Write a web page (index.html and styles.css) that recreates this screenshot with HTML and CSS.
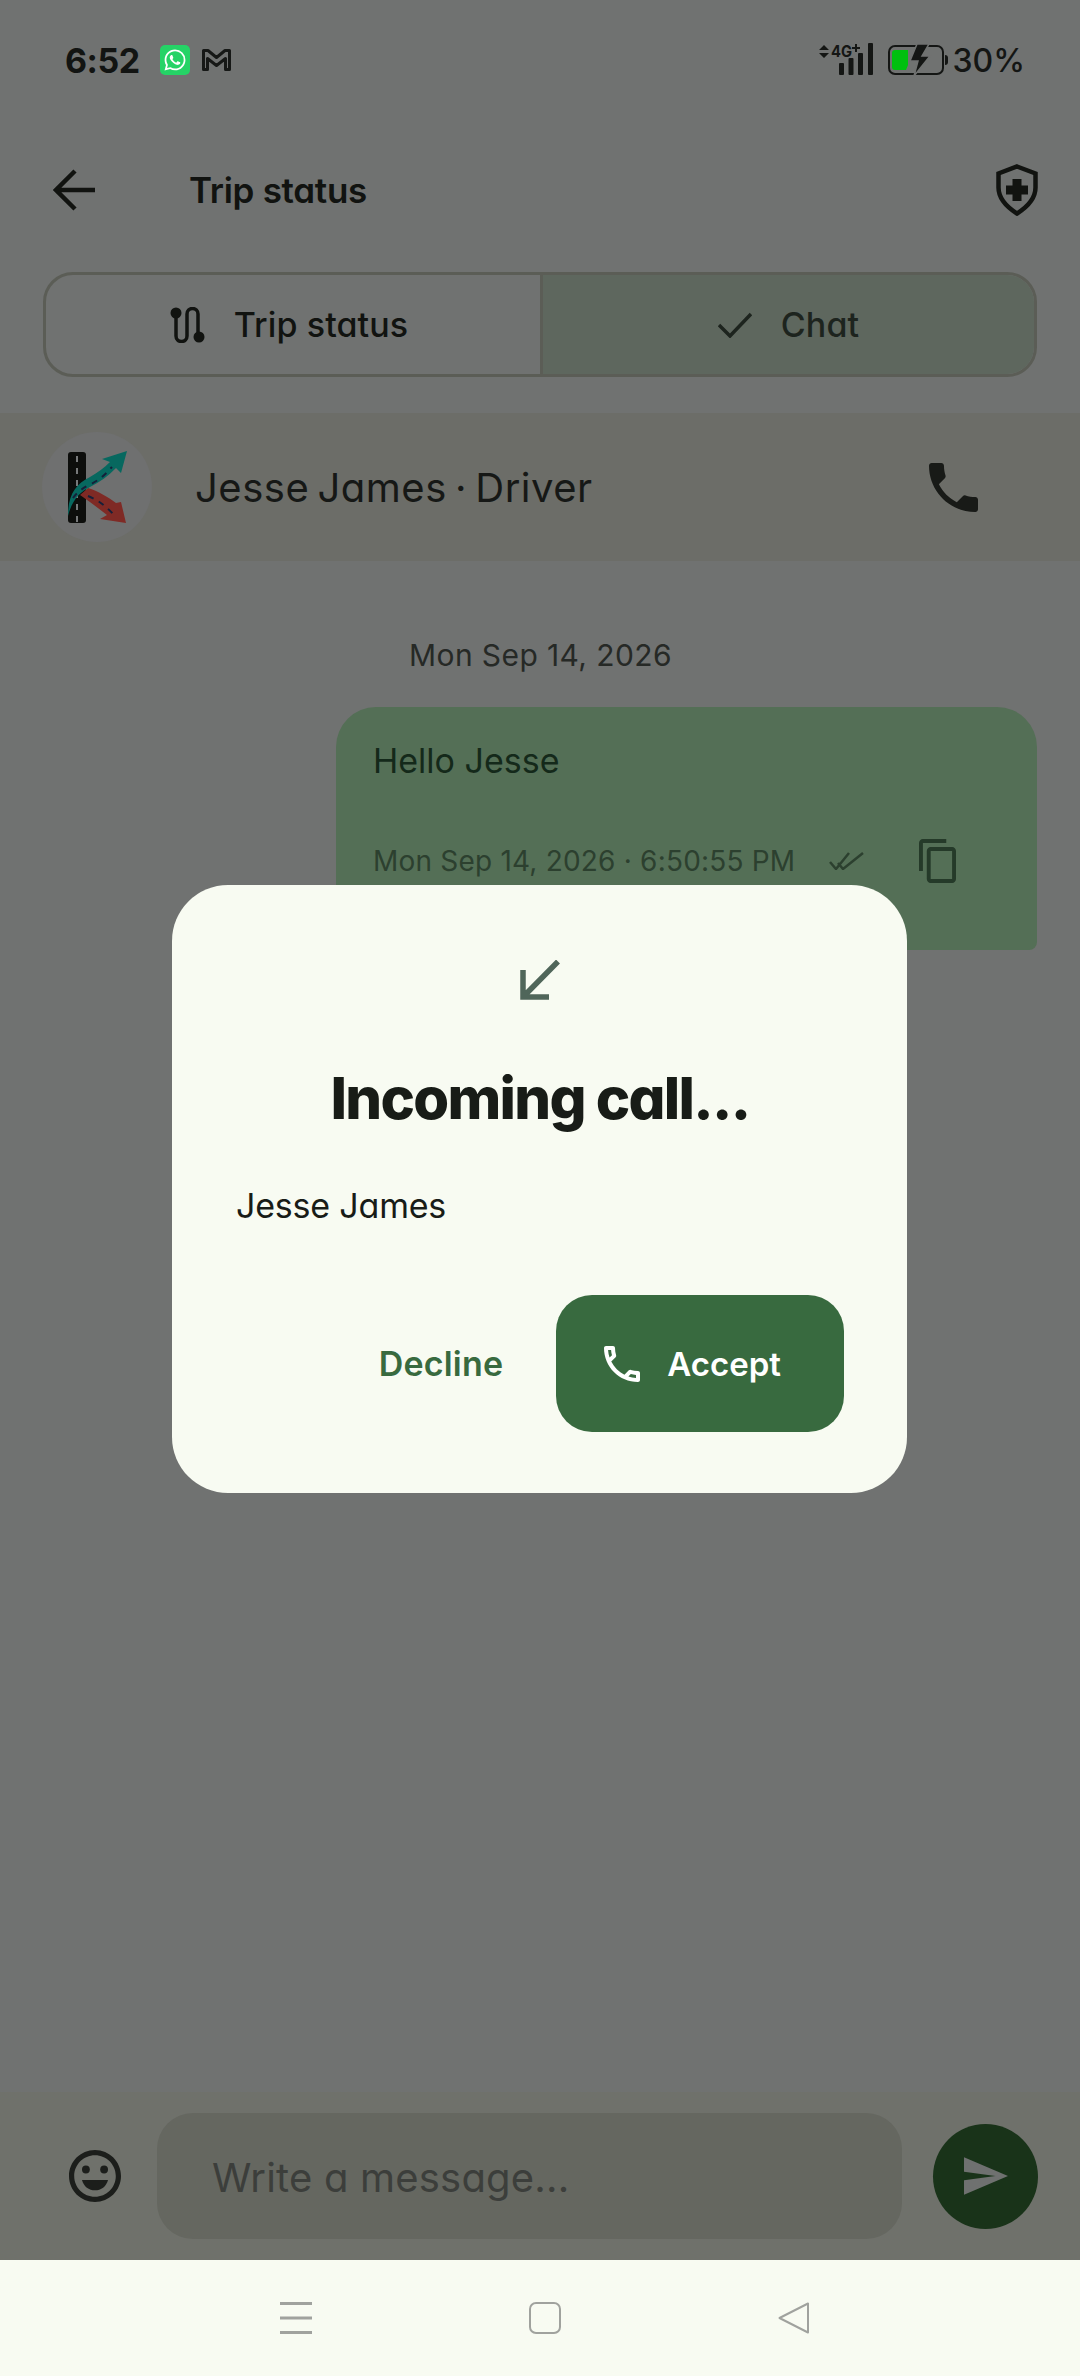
FILE: index.html
```html
<!DOCTYPE html>
<html>

<head>
    <meta charset="UTF-8">
    <title>Trip status</title>
    <link rel="stylesheet" href="styles.css">
</head>

<body>
    <div class="screen">
        <div class="status-bar">
            <div class="status-left">
                <span class="clock">6:52</span>
                <svg class="icon-whatsapp" viewBox="0 0 30 30">
                    <rect width="30" height="30" rx="5" fill="#25d366" />
                    <g transform="translate(4.5 4.5) scale(.875)">
                        <path fill="#fff" d="M17.472 14.382c-.297-.149-1.758-.867-2.03-.967-.273-.099-.471-.148-.67.15-.197.297-.767.966-.94 1.164-.173.199-.347.223-.644.075-.297-.15-1.255-.463-2.39-1.475-.883-.788-1.48-1.761-1.653-2.059-.173-.297-.018-.458.13-.606.134-.133.298-.347.446-.52.149-.174.198-.298.298-.497.099-.198.05-.371-.025-.52-.075-.149-.669-1.612-.916-2.207-.242-.579-.487-.5-.669-.51-.173-.008-.371-.01-.57-.01-.198 0-.52.074-.792.372-.272.297-1.04 1.016-1.04 2.479 0 1.462 1.065 2.875 1.213 3.074.149.198 2.096 3.2 5.077 4.487.709.306 1.262.489 1.694.625.712.227 1.36.195 1.871.118.571-.085 1.758-.719 2.006-1.413.248-.694.248-1.289.173-1.413-.074-.124-.272-.198-.57-.347m-5.421 7.403h-.004a9.87 9.87 0 01-5.031-1.378l-.361-.214-3.741.982.998-3.648-.235-.374a9.86 9.86 0 01-1.51-5.26c.001-5.45 4.436-9.884 9.888-9.884 2.64 0 5.122 1.03 6.988 2.898a9.825 9.825 0 012.893 6.994c-.003 5.45-4.437 9.884-9.885 9.884m8.413-18.297A11.815 11.815 0 0012.05 0C5.495 0 .16 5.335.157 11.892c0 2.096.547 4.142 1.588 5.945L.057 24l6.305-1.654a11.882 11.882 0 005.683 1.448h.005c6.554 0 11.89-5.335 11.893-11.893a11.821 11.821 0 00-3.48-8.413Z" />
                    </g>
                </svg>
                <svg class="icon-mail" viewBox="0 0 29 24">
                    <path fill="none" stroke="#161816" stroke-width="3" stroke-linejoin="round" d="M1.5 2.5h4.5l8.500 7 8.500-7h4.500v19h-4v-11l-9 7-9-7v11h-4z" />
                </svg>
            </div>
            <div class="status-right">
                <svg class="icon-signal" viewBox="0 -4 54 36">
                    <path fill="#141614" d="M0 7l5-5 5 5zM0 10l5 5 5-5z" />
                    <rect x="20" y="20" width="5" height="12" rx="1" fill="#141614" />
                    <rect x="29.500" y="15" width="5" height="17" rx="1" fill="#141614" />
                    <rect x="39" y="10" width="5" height="22" rx="1" fill="#141614" />
                    <rect x="49" y="0" width="5" height="32" rx="1" fill="#141614" />
                    <text x="12" y="14" class="signal-label" textLength="21" lengthAdjust="spacingAndGlyphs">4G</text>
                    <path fill="#141614" d="M33 4h3v-3h2v3h3v2h-3v3h-2v-3h-3z" />
                </svg>
                <svg class="icon-battery" viewBox="0 0 60 32">
                    <rect x="1" y="2" width="54" height="28" rx="6" fill="none" stroke="#141614" stroke-width="2" />
                    <path d="M57 11c2 0 3 1 3 3v4c0 2-1 3-3 3z" fill="#141614" />
                    <path d="M7 6h13v15l-2 5h-11c-2 0-3-1-3-3v-14c0-2 1-3 3-3z" fill="#00c00f" />
                    <path d="M29 0h12l-7 12h8l-16 20 4-15h-8z" fill="#141614" stroke="#707271" stroke-width="1.500" />
                </svg>
                <span class="battery-level">30%</span>
            </div>
        </div>

        <div class="top-bar">
            <svg class="icon-back" viewBox="0 0 42 42">
                <path fill="none" stroke="#111310" stroke-width="4.500" d="M42 21H3M22 2L3 21l19 19" />
            </svg>
            <span class="top-title">Trip status</span>
            <svg class="icon-shield" viewBox="0 0 42 52">
                <path fill="none" stroke="#111310" stroke-width="4.500" d="M21 2.500l18.500 7v14c0 11-7.500 19-18.500 26-11-7-18.500-15-18.500-26v-14z" />
                <path fill="#111310" d="M16.500 15h9v6.500h6.500v9h-6.500v6.500h-9v-6.500h-6.500v-9h6.500z" />
            </svg>
        </div>

        <div class="tabs">
            <div class="tab first">
                <svg class="icon-route" viewBox="0 0 36 36">
                    <path fill="none" stroke="#111310" stroke-width="3.500" d="M6 6v23a5.500 5.500 0 0 0 11 0V7a5.500 5.500 0 0 1 11 0v22" />
                    <circle cx="6" cy="6" r="5.500" fill="#111310" />
                    <circle cx="29" cy="30" r="5.500" fill="#111310" />
                </svg>
                <span>Trip status</span>
            </div>
            <div class="tab selected">
                <svg class="icon-check" viewBox="0 0 34 26">
                    <path fill="none" stroke="#1d241e" stroke-width="3.500" d="M1 13l11 11L33 2" />
                </svg>
                <span>Chat</span>
            </div>
        </div>

        <div class="contact">
            <svg class="avatar" viewBox="0 0 110 110">
                <circle cx="55" cy="55" r="55" fill="#6f7070" />
                <rect x="26" y="20" width="18" height="71" rx="3" fill="#0d0e0c" />
                <path fill="none" stroke="#77797a" stroke-width="2" stroke-dasharray="6 6" d="M35 24v66" />
                <path fill="#7f2a25" d="M38 63L46 56C56 59 66 65 74 71L79 70L84 91L58 87L65 83C56 76 47 69 38 63Z" />
                <path fill="none" stroke="#15203a" stroke-width="2" stroke-dasharray="6 6" d="M46 64c10 4 18 10 25 18" />
                <path fill="#07685f" d="M26 84c0-22 8-32 22-39 8-5 14-9 20-15l-8-3 25-8-6 22-5-5c-8 8-16 14-26 19-10 5-18 13-22 29z" />
                <path fill="none" stroke="#15203a" stroke-width="2" stroke-dasharray="6 6" d="M31 66c4-6 10-10 18-14 8-4 14-9 21-17" />
            </svg>
            <span class="contact-name">Jesse James · Driver</span>
            <svg class="icon-phone" viewBox="3 3 18 18">
                <path fill="#181a17" d="M6.620 10.790c1.440 2.830 3.760 5.140 6.590 6.590l2.200-2.200c.27-.27.67-.36 1.020-.24 1.120.37 2.330.57 3.570.57.55 0 1 .45 1 1V20c0 .55-.45 1-1 1-9.390 0-17-7.610-17-17 0-.55.45-1 1-1h3.500c.55 0 1 .45 1 1 0 1.250.2 2.450.57 3.570.11.35.03.74-.25 1.020l-2.200 2.200z" />
            </svg>
        </div>

        <div class="messages">
            <div class="day">Mon Sep 14, 2026</div>
            <div class="bubble">
                <div class="bubble-text">Hello Jesse</div>
                <div class="bubble-meta">
                    <span class="bubble-time">Mon Sep 14, 2026 · 6:50:55 PM</span>
                    <svg class="icon-read" viewBox="0 0 35 18">
                        <path fill="none" stroke="#2c402f" stroke-width="2.500" d="M1 10l6 7L20 1M9 11l5 6L34 1" />
                    </svg>
                    <svg class="icon-copy" viewBox="2 1 19 22" preserveAspectRatio="none">
                        <path fill="#253a29" d="M16 1H4c-1.100 0-2 .9-2 2v14h2V3h12V1zm3 4H8c-1.100 0-2 .9-2 2v14c0 1.100.9 2 2 2h11c1.100 0 2-.9 2-2V7c0-1.100-.9-2-2-2zm0 16H8V7h11v14z" />
                    </svg>
                </div>
            </div>
        </div>

        <div class="composer">
            <svg class="icon-smile" viewBox="2 2 20 20">
                <path fill="#1c1e1b" d="M11.990 2C6.470 2 2 6.480 2 12s4.470 10 9.990 10C17.520 22 22 17.520 22 12S17.520 2 11.990 2zM12 20c-4.420 0-8-3.580-8-8s3.580-8 8-8 8 3.580 8 8-3.580 8-8 8z" />
                <circle cx="8.500" cy="9.500" r="1.500" fill="#1c1e1b" />
                <circle cx="15.500" cy="9.500" r="1.500" fill="#1c1e1b" />
                <path fill="#1c1e1b" d="M7 13.500h10c-.6 2.500-2.700 4-5 4s-4.400-1.500-5-4z" />
            </svg>
            <div class="message-input">Write a message...</div>
            <div class="send-button">
                <svg class="icon-send" viewBox="2 3 21 18">
                    <path fill="#6f7170" d="M2.010 21L23 12 2.010 3 2 10l15 2-15 2z" />
                </svg>
            </div>
        </div>

        <div class="nav-bar">
            <svg class="nav-icon" viewBox="0 0 32 32">
                <path fill="none" stroke="#a0a29e" stroke-width="3" d="M0 1.500h32M0 16h32M0 30.500h32" />
            </svg>
            <svg class="nav-icon" viewBox="0 0 32 32">
                <rect x="1" y="1" width="30" height="30" rx="6" fill="none" stroke="#a0a29e" stroke-width="2" />
            </svg>
            <svg class="nav-icon" viewBox="0 0 32 32">
                <path fill="none" stroke="#a0a29e" stroke-width="2" stroke-linejoin="round" d="M30 1.500v29L1.500 16z" />
            </svg>
        </div>

        <div class="dialog">
            <svg class="icon-incoming" viewBox="0 0 40 40">
                <path fill="none" stroke="#50665a" stroke-width="5.500" d="M38 1.500L3 37M3 10v27h26" />
            </svg>
            <h1 class="dialog-title">Incoming call...</h1>
            <div class="dialog-name">Jesse James</div>
            <div class="dialog-actions">
                <span class="decline">Decline</span>
                <div class="accept">
                    <svg class="icon-local-call" viewBox="3 3 18 18">
                        <path fill="#fff" d="M6.540 5c.06.89.21 1.760.45 2.590l-1.200 1.200c-.41-1.200-.67-2.470-.76-3.790h1.510m9.860 12.020c.85.24 1.720.39 2.600.45v1.490c-1.320-.09-2.590-.35-3.800-.75l1.200-1.190M7.500 3H4c-.55 0-1 .45-1 1 0 9.390 7.610 17 17 17 .55 0 1-.45 1-1v-3.490c0-.55-.45-1-1-1-1.240 0-2.450-.2-3.570-.57-.1-.04-.21-.05-.31-.05-.26 0-.51.1-.71.29l-2.200 2.200c-2.830-1.450-5.150-3.760-6.590-6.590l2.200-2.200c.28-.28.36-.67.25-1.020C8.700 6.450 8.500 5.250 8.500 4c0-.55-.45-1-1-1z" />
                    </svg>
                    <span>Accept</span>
                </div>
            </div>
        </div>
    </div>
</body>

</html>
```

FILE: styles.css
```css
* {
    box-sizing: border-box;
}

body {
    margin: 0;
    font-family: Inter, "Noto Sans", sans-serif;
    font-feature-settings: "cv11";
    color: #111310;
}

svg {
    display: block;
    flex: none;
}

.screen {
    position: relative;
    display: flex;
    flex-direction: column;
    width: 1080px;
    height: 2376px;
    overflow: hidden;
    background-color: #707271;
}

/* status bar */
.status-bar {
    display: flex;
    align-items: center;
    justify-content: space-between;
    height: 120px;
    padding: 0 55px 0 65px;
}

.status-left,
.status-right {
    display: flex;
    align-items: center;
}

.clock {
    width: 95px;
    font-size: 34px;
    font-weight: 700;
    letter-spacing: -0.5px;
    color: #121412;
    font-feature-settings: normal;
}

.icon-whatsapp {
    width: 30px;
    height: 30px;
}

.icon-mail {
    width: 29px;
    height: 24px;
    margin-left: 12px;
}

.icon-signal {
    width: 54px;
    height: 36px;
    margin-bottom: 7px;
}

.signal-label {
    font-size: 16px;
    font-weight: 700;
    fill: #141614;
    font-feature-settings: normal;
}

.icon-battery {
    width: 60px;
    height: 32px;
    margin-left: 15px;
}

.battery-level {
    margin-left: 5px;
    font-size: 32px;
    font-weight: 500;
    color: #141614;
}

/* title row */
.top-bar {
    display: flex;
    align-items: center;
    height: 140px;
    padding: 0 42px 0 53px;
}

.icon-back {
    width: 42px;
    height: 42px;
}

.top-title {
    flex: 1;
    margin-left: 94px;
    font-size: 35px;
    font-weight: 600;
    letter-spacing: -0.3px;
}

.icon-shield {
    width: 42px;
    height: 52px;
}

/* tabs */
.tabs {
    display: flex;
    height: 105px;
    margin: 12px 43px 0;
    border: 3px solid #5b5d56;
    border-radius: 30px;
    overflow: hidden;
}

.tab {
    display: flex;
    align-items: center;
    justify-content: center;
    gap: 28px;
    font-size: 34px;
    font-weight: 550;
    letter-spacing: 0.1px;
}

.tab.first {
    width: 494px;
    padding-right: 8px;
}

.tab.selected {
    flex: 1;
    gap: 29px;
    border-left: 3px solid #5b5d56;
    background-color: #5e675e;
    color: #1d241e;
}

.icon-route {
    width: 36px;
    height: 36px;
}

.icon-check {
    width: 34px;
    height: 26px;
}

/* contact row */
.contact {
    display: flex;
    align-items: center;
    height: 148px;
    margin-top: 36px;
    padding: 0 102px 0 42px;
    background-color: #6c6d68;
}

.avatar {
    width: 110px;
    height: 110px;
}

.contact-name {
    flex: 1;
    margin-left: 43px;
    font-size: 40px;
    letter-spacing: 0.5px;
    word-spacing: -3.5px;
    color: #161816;
}

.icon-phone {
    width: 49px;
    height: 49px;
}

/* messages */
.messages {
    display: flex;
    flex: 1;
    flex-direction: column;
    padding: 74px 43px 0 336px;
}

.day {
    margin-left: 73px;
    font-size: 30px;
    line-height: 40px;
    letter-spacing: 0.4px;
    color: #262926;
}

.bubble {
    height: 243px;
    margin-top: 32px;
    padding: 32px 37px 0;
    border-radius: 40px 40px 8px 8px;
    background-color: #546f56;
}

.bubble-text {
    font-size: 34px;
    line-height: 44px;
    color: #14291a;
}

.bubble-meta {
    display: flex;
    align-items: center;
    margin-top: 56px;
}

.bubble-time {
    width: 456px;
    font-size: 28px;
    letter-spacing: 0.2px;
    color: #2c402f;
}

.icon-read {
    width: 35px;
    height: 18px;
}

.icon-copy {
    width: 37px;
    height: 44px;
    margin-left: 55px;
}

/* message composer */
.composer {
    display: flex;
    align-items: center;
    height: 168px;
    padding: 0 42px 0 69px;
    background-color: #6f716b;
}

.icon-smile {
    width: 52px;
    height: 52px;
}

.message-input {
    display: flex;
    flex: 1;
    align-items: center;
    height: 126px;
    margin: 0 31px 0 36px;
    padding: 2px 0 0 55px;
    border-radius: 36px;
    background-color: #656760;
    font-size: 40px;
    letter-spacing: 0.2px;
    color: #3c3e3b;
}

.send-button {
    display: flex;
    align-items: center;
    justify-content: center;
    width: 105px;
    height: 105px;
    border-radius: 50%;
    background-color: #193319;
}

.icon-send {
    width: 44px;
    height: 38px;
}

/* android buttons */
.nav-bar {
    display: flex;
    align-items: center;
    height: 116px;
    padding: 0 270px 0 280px;
    justify-content: space-between;
    background-color: #f8fbf2;
}

.nav-icon {
    width: 32px;
    height: 32px;
}

/* incoming call dialog */
.dialog {
    position: absolute;
    left: 172px;
    top: 885px;
    display: flex;
    flex-direction: column;
    width: 735px;
    height: 608px;
    padding: 75px 63px 61px 64px;
    border-radius: 56px;
    background-color: #f8fbf2;
}

.icon-incoming {
    width: 40px;
    height: 40px;
    margin: 0 auto;
}

.dialog-title {
    margin: 60px 0 0;
    font-size: 58px;
    line-height: 76px;
    font-weight: 800;
    letter-spacing: -1.7px;
    text-align: center;
    color: #181c17;
}

.dialog-name {
    margin-top: 48px;
    font-size: 34px;
    line-height: 44px;
    letter-spacing: -0.2px;
    color: #181c17;
}

.dialog-actions {
    display: flex;
    align-items: center;
    justify-content: flex-end;
    gap: 53px;
    margin-top: auto;
}

.decline {
    font-size: 34px;
    font-weight: 600;
    letter-spacing: 0.2px;
    color: #386a3f;
}

.accept {
    display: flex;
    align-items: center;
    gap: 27px;
    height: 137px;
    padding: 0 63px 0 48px;
    border-radius: 36px;
    background-color: #386a3f;
    font-size: 33px;
    font-weight: 600;
    color: #fff;
}

.icon-local-call {
    width: 36px;
    height: 36px;
}
```
